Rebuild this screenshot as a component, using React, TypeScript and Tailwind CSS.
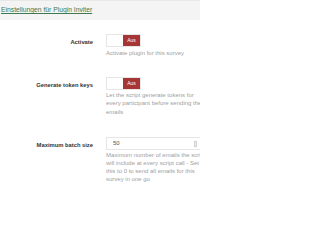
export default function App() {
  const Toggle = () => (
    <div className="flex h-[13px] w-[35px] shrink-0 border border-[#e6e6e6] bg-white">
      <div className="w-[16px]" />
      <div className="flex flex-1 items-center justify-center bg-[#a63535] text-[5px] leading-none text-white">
        Aus
      </div>
    </div>
  );

  return (
    <div className="h-[200px] w-[200px] overflow-hidden bg-white font-['Liberation_Sans',Arial,sans-serif]">
      {/* HEADER */}
      <div className="flex h-[20px] items-center border-t border-[#e8e8e8] bg-[#f4f4f4] pl-[1px]">
        <span className="whitespace-nowrap text-[6.75px] text-[#3f7a4e] underline">Einstellungen für Plugin Inviter</span>
      </div>

      {/* ACTIVATE */}
      <div className="mt-[14px] flex gap-[13px]">
        <div className="w-[93px] shrink-0 pt-[5px] text-right text-[5.8px] font-bold leading-[6px] text-[#333]">Activate</div>
        <div className="flex min-w-0 flex-col">
          <Toggle />
          <p className="mt-[2px] whitespace-nowrap text-[6px] leading-[8.4px] text-[#a0a0a0]">Activate plugin for this survey</p>
        </div>
      </div>

      {/* TOKEN KEYS */}
      <div className="mt-[19.5px] flex gap-[13px]">
        <div className="w-[93px] shrink-0 pt-[5px] text-right text-[5.8px] font-bold leading-[6px] text-[#333]">Generate token keys</div>
        <div className="flex min-w-0 flex-col">
          <Toggle />
          <p className="mt-[1px] whitespace-nowrap text-[6px] leading-[8.4px] text-[#a0a0a0]">
            Let the script generate tokens for
            <br />
            every participant before sending the
            <br />
            emails
          </p>
        </div>
      </div>

      {/* BATCH SIZE */}
      <div className="mt-[21px] flex gap-[13px]">
        <div className="w-[93px] shrink-0 pt-[5px] text-right text-[5.8px] font-bold leading-[6px] text-[#333]">Maximum batch size</div>
        <div className="flex min-w-0 flex-col">
          <div className="flex h-[13px] w-[96px] items-center border border-[#e6e6e6] bg-white pl-[6px] text-[6px] text-[#555]">
            50
            <span className="ml-auto mr-[4px] flex h-[6px] w-[3px] flex-col justify-between border border-[#cfcfcf] bg-[#f2f2f2]" />
          </div>
          <p className="mt-[1px] whitespace-nowrap text-[6px] leading-[8.1px] text-[#a0a0a0]">
            Maximum number of emails the script
            <br />
            will include at every script call - Set
            <br />
            this to 0 to send all emails for this
            <br />
            survey in one go
          </p>
        </div>
      </div>
    </div>
  );
}
